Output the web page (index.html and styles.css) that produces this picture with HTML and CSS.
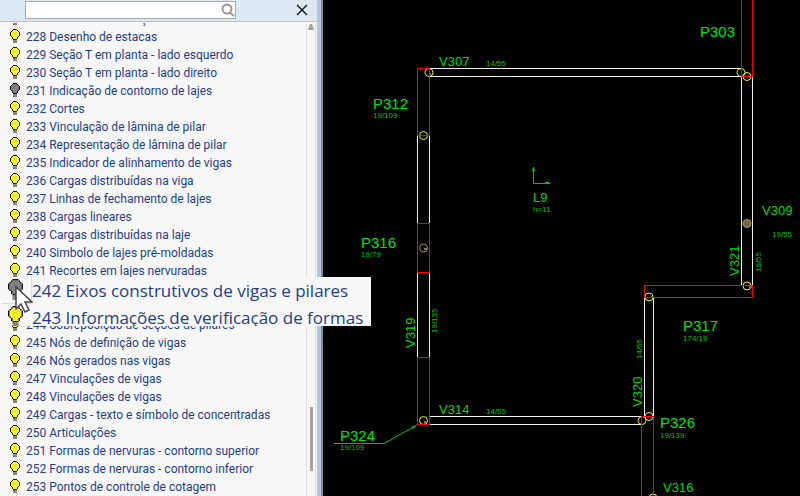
FILE: index.html
```html
<!DOCTYPE html>
<html lang="pt-BR">
<head>
<meta charset="utf-8">
<title>Níveis de desenho</title>
<link rel="stylesheet" href="styles.css">
</head>
<body>
<svg class="defs" aria-hidden="true">
  <symbol id="bulb" viewBox="0 0 10 16">
    <path class="glass" d="M3 1h4v1h1v1h1v4h-1v1h-1v2h-4v-2h-1v-1h-1v-4h1v-1h1z"/>
    <path class="glint" d="M3 3h1v1h-1zM6 3h1v1h-1zM4 4h2v1h-2zM3 5h1v1h-1zM6 5h1v1h-1z"/>
    <path d="M3 0h4v1h-4zM2 1h1v1h-1zM7 1h1v1h-1zM1 2h1v1h-1zM8 2h1v1h-1zM0 3h1v4h-1zM9 3h1v4h-1zM1 7h1v1h-1zM8 7h1v1h-1zM2 8h1v2h-1zM7 8h1v2h-1zM3 10h4v1h-4z" fill="#111"/>
    <path d="M3 11h4v3h-4z" fill="#858585"/>
  </symbol>
</svg>
<div class="app">
  <aside class="panel">
    <header class="bar">
      <div class="search">
        <input type="text" aria-label="Pesquisar">
        <svg viewBox="0 0 14 14"><circle cx="6" cy="6" r="4.5"/><path d="M9 10l4 3" /></svg>
      </div>
      <button class="close" aria-label="Fechar"><svg viewBox="0 0 12 12"><path d="M1 1l10 10M11 1L1 11"/></svg></button>
    </header>
    <div class="content">
      <ul class="levels">
        <li><button><svg><use href="#bulb"/></svg>227 Dimensões de seção</button></li>
        <li><button><svg><use href="#bulb"/></svg>228 Desenho de estacas</button></li>
        <li><button><svg><use href="#bulb"/></svg>229 Seção T em planta - lado esquerdo</button></li>
        <li><button><svg><use href="#bulb"/></svg>230 Seção T em planta - lado direito</button></li>
        <li><button class="off"><svg><use href="#bulb"/></svg>231 Indicação de contorno de lajes</button></li>
        <li><button><svg><use href="#bulb"/></svg>232 Cortes</button></li>
        <li><button><svg><use href="#bulb"/></svg>233 Vinculação de lâmina de pilar</button></li>
        <li><button><svg><use href="#bulb"/></svg>234 Representação de lâmina de pilar</button></li>
        <li><button><svg><use href="#bulb"/></svg>235 Indicador de alinhamento de vigas</button></li>
        <li><button><svg><use href="#bulb"/></svg>236 Cargas distribuídas na viga</button></li>
        <li><button><svg><use href="#bulb"/></svg>237 Linhas de fechamento de lajes</button></li>
        <li><button><svg><use href="#bulb"/></svg>238 Cargas lineares</button></li>
        <li><button><svg><use href="#bulb"/></svg>239 Cargas distribuídas na laje</button></li>
        <li><button><svg><use href="#bulb"/></svg>240 Simbolo de lajes pré-moldadas</button></li>
        <li><button><svg><use href="#bulb"/></svg>241 Recortes em lajes nervuradas</button></li>
        <li class="magnified">
          <div class="lens">
            <button class="off"><svg><use href="#bulb"/></svg>242 Eixos construtivos de vigas e pilares</button>
            <button><svg><use href="#bulb"/></svg>243 Informações de verificação de formas</button>
            <svg class="cursor" viewBox="0 0 18 28"><path d="M1 1v22l5-5 4 8 4-2-4-8h7z"/></svg>
          </div>
        </li>
        <li><button><svg><use href="#bulb"/></svg>244 Sobreposição de seções de pilares</button></li>
        <li><button><svg><use href="#bulb"/></svg>245 Nós de definição de vigas</button></li>
        <li><button><svg><use href="#bulb"/></svg>246 Nós gerados nas vigas</button></li>
        <li><button><svg><use href="#bulb"/></svg>247 Vinculações de vigas</button></li>
        <li><button><svg><use href="#bulb"/></svg>248 Vinculações de vigas</button></li>
        <li><button><svg><use href="#bulb"/></svg>249 Cargas - texto e símbolo de concentradas</button></li>
        <li><button><svg><use href="#bulb"/></svg>250 Articulações</button></li>
        <li><button><svg><use href="#bulb"/></svg>251 Formas de nervuras - contorno superior</button></li>
        <li><button><svg><use href="#bulb"/></svg>252 Formas de nervuras - contorno inferior</button></li>
        <li><button><svg><use href="#bulb"/></svg>253 Pontos de controle de cotagem</button></li>
      </ul>
      <div class="track">
        <svg viewBox="0 0 6 6"><path d="M2 0h2l2 6h-6z"/></svg>
        <div class="thumb"></div>
      </div>
    </div>
  </aside>
  <main class="drawing">
    <svg viewBox="323 0 477 496" preserveAspectRatio="xMinYMin slice">
      <g class="node">
        <circle cx="429" cy="72.500" r="4"/>
        <circle cx="423.500" cy="135.500" r="4"/>
        <circle class="dim" cx="423.500" cy="248" r="4"/>
        <circle cx="423.500" cy="420.500" r="4"/>
        <circle cx="741" cy="72.500" r="4"/>
        <circle cx="747" cy="76.500" r="4"/>
        <circle class="dim full" cx="747" cy="223.500" r="4"/>
        <circle cx="747" cy="286" r="4"/>
        <circle cx="649" cy="297" r="4"/>
        <circle cx="649" cy="416.500" r="4"/>
        <circle cx="642" cy="420.500" r="4"/>
        <circle cx="653" cy="498" r="4"/>
      </g>
      <path class="mark" d="M424 248h3v2h-3zM424 421h3v2h-3zM429 73h2v3h-2zM749 286h3v2h-3zM651 296h2v2h-2z"/>
      <g class="beam">
        <path d="M430 68.500H741M430 76.500H741M741.500 77V285M752.500 77V285"/>
        <path d="M417.500 136V223M429.500 136V223M417.500 273V357M429.500 273V357"/>
        <path d="M430 416.500H641M430 424.500H641M644.500 298V416M653.500 298V416"/>
      </g>
      <g class="column">
        <path d="M417.500 68.500h12v67h-12zM417.500 223.500h12v49h-12zM417.500 357.500h12v67h-12z"/>
        <path d="M741.500 0V76.500H752.500V0M644.500 285.500H752.500V297.500H644.500zM641.500 496V416.500H653.500V496"/>
      </g>
      <g class="leader">
        <path d="M334 443.500H384L417 425M533.500 167V183.500H550"/>
        <path class="tip" d="M417 425l-4 4-2-2zM532 171l1-4h1l1 4zM545 182h4v2h-4z"/>
      </g>
      <g class="column-name">
        <text x="700" y="37">P303</text>
        <text x="373" y="109">P312</text>
        <text x="361" y="248">P316</text>
        <text x="683" y="331">P317</text>
        <text x="660" y="428">P326</text>
        <text x="340" y="441">P324</text>
      </g>
      <g class="beam-name">
        <text x="439" y="66">V307</text>
        <text x="762" y="215">V309</text>
        <text x="439" y="414">V314</text>
        <text x="663" y="492">V316</text>
        <text x="533" y="202">L9</text>
        <text transform="translate(415 348) rotate(-90)">V319</text>
        <text transform="translate(739 276) rotate(-90)">V321</text>
        <text transform="translate(642 407) rotate(-90)">V320</text>
      </g>
      <g class="size">
        <text x="486" y="66">14/55</text>
        <text x="373" y="118">19/109</text>
        <text x="361" y="257">19/79</text>
        <text x="533" y="212">h=11</text>
        <text x="772" y="237">19/55</text>
        <text x="683" y="341">174/19</text>
        <text x="660" y="438">19/139</text>
        <text x="486" y="414">14/55</text>
        <text x="340" y="450">19/109</text>
        <text transform="translate(437 333) rotate(-90)">19/135</text>
        <text transform="translate(761 272) rotate(-90)">19/55</text>
        <text transform="translate(642 359) rotate(-90)">14/55</text>
      </g>
    </svg>
  </main>
</div>
</body>
</html>
```

FILE: styles.css
```css
* { box-sizing: border-box; }
body {
  margin: 0;
  overflow: hidden;
  background: #000;
  font-family: Roboto, "Noto Sans", sans-serif;
  font-size: 12px;
  color: #1f3f87;
}
button {
  border: 0;
  padding: 0;
  background: none;
  font: inherit;
  color: inherit;
}
.defs { position: absolute; width: 0; height: 0; }
.app { display: flex; height: 100vh; }

.panel {
  display: flex;
  flex-direction: column;
  flex: 0 0 321px;
  border-right: 4px solid #adc6e6;
  background: #f7f7f7;
}
.bar {
  position: relative;
  z-index: 1;
  display: flex;
  flex: none;
  align-items: center;
  justify-content: space-between;
  height: 22px;
  padding: 0 9px 1px 25px;
  border-bottom: 1px solid #a9c5e2;
  box-shadow: 0 1px #f7f7f7;
  background: #dce9f3;
}
.search {
  display: flex;
  align-items: center;
  width: 211px;
  height: 18px;
  border: 1px solid #ababab;
  background: #fff;
}
.search input {
  flex: 1;
  min-width: 0;
  height: 16px;
  border: 0;
  padding: 0 4px;
  outline: 0;
  background: none;
  font: inherit;
}
.search svg { width: 14px; height: 14px; fill: none; stroke: #999; stroke-width: 2; }
.close { display: flex; }
.close svg { width: 12px; height: 12px; stroke: #111; stroke-width: 1.4; }

.content { display: flex; flex: 1; min-height: 0; }
.levels {
  flex: 1;
  margin: -12px 0 0;
  padding: 0;
  list-style: none;
}
.levels li { height: 18px; }
.levels button {
  display: flex;
  align-items: center;
  gap: 6px;
  height: 18px;
  padding-left: 10px;
  line-height: 18px;
  white-space: nowrap;
}
.levels button svg {
  flex: none;
  width: 10px;
  height: 16px;
  shape-rendering: crispEdges;
  --glass: #ff0;
  --glint: #c9c95a;
}
.levels button.off svg { --glass: #808080; --glint: #808080; }
.glass { fill: var(--glass); }
.glint { fill: var(--glint); }

.levels .magnified { position: relative; height: 36px; }
.lens {
  position: absolute;
  z-index: 2;
  top: -3px;
  left: 2px;
  width: 369px;
  height: 49px;
  overflow: hidden;
  background: #f7f7f7;
  font-family: "Open Sans", "Noto Sans", sans-serif;
  font-size: 17px;
}
.levels .lens button { height: 27px; gap: 9px; padding-left: 6px; line-height: 26px; }
.levels .lens button:first-child { background: linear-gradient(#ddd, #ddd) 0 26px / 30px 1px no-repeat, linear-gradient(#ddd, #ddd) 29px 0 / 1px 27px no-repeat; }
.levels .lens button svg { width: 15px; height: 24px; shape-rendering: auto; }
.cursor {
  position: absolute;
  top: 9px;
  left: 13px;
  width: 18px;
  height: 28px;
  fill: #fff;
  stroke: #444;
  stroke-width: 1.5;
}

.track {
  display: flex;
  flex-direction: column;
  align-items: center;
  width: 10px;
  margin-right: 1px;
  padding-top: 2px;
  border: solid #dedede;
  border-width: 0 1px;
}
.track svg { width: 6px; height: 6px; fill: #a0a0a0; }
.thumb { width: 3px; height: 64px; margin-top: 377px; background: #a3a3a3; }

.drawing { flex: 1; min-width: 0; border-left: 2px solid #858585; background: #000; }
.drawing svg {
  display: block;
  width: 100%;
  height: 100%;
  fill: none;
  font-family: "Liberation Sans", Arial, sans-serif;
}
.beam, .column { stroke-width: 1; shape-rendering: crispEdges; }
.beam { stroke: #eee; }
.column { stroke: #f00; }
.node { stroke: #f4ee20; stroke-width: 1; }
.node .dim { stroke: #a89355; }
.node .full { fill: #75673f; }
.mark { fill: #8a7638; }
.leader { stroke: #00c800; }
.leader .tip { fill: #00c800; stroke: none; }
.column-name { fill: #00e600; font-size: 15px; }
.beam-name { fill: #00dc00; font-size: 13px; }
.size { fill: #00c000; font-size: 8px; }
```
